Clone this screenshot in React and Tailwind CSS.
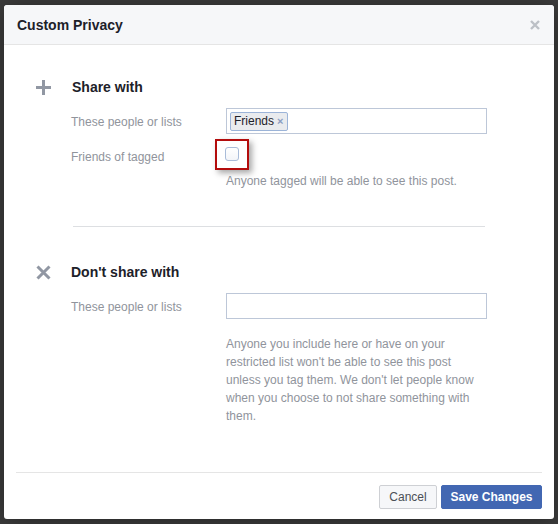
import React from "react";

function PlusIcon() {
  return (
    <svg width="15" height="15" viewBox="0 0 15 15">
      <rect x="0" y="6" width="15" height="3" fill="#9197a3" />
      <rect x="6" y="0" width="3" height="15" fill="#9197a3" />
    </svg>
  );
}

function CrossIcon() {
  return (
    <svg width="15" height="15" viewBox="0 0 15 15">
      <path d="M1.5 1.5 L13.5 13.5 M13.5 1.5 L1.5 13.5" stroke="#9197a3" strokeWidth="3" />
    </svg>
  );
}

export default function App() {
  const font = { fontFamily: '"Liberation Sans", Arial, sans-serif' };
  return (
    <div className="w-[558px] h-[524px] bg-[#3d3d3d] pt-[5px] pl-[4px] overflow-hidden" style={font}>
      <div className="w-[550px] h-[514px] bg-white rounded-[3px] shadow-[0_2px_26px_rgba(0,0,0,0.4)] flex flex-col overflow-hidden">
        {/* Header */}
        <div className="h-[40px] shrink-0 bg-[#f6f7f9] border-b border-[#e5e5e5] flex items-center justify-between pl-[13px] pr-[14px] rounded-t-[3px]">
          <span className="text-[14px] font-bold text-[#1d2129] leading-[18px]">Custom Privacy</span>
          <svg width="10" height="10" viewBox="0 0 10 10" className="mt-[1px]">
            <path d="M1 1 L9 9 M9 1 L1 9" stroke="#bcc0c6" strokeWidth="2.4" />
          </svg>
        </div>

        {/* Body */}
        <div className="flex-1 pl-[32px] pt-[33px]">
          {/* Share with */}
          <div className="flex">
            <div className="w-[36px] h-[18px] flex items-center">
              <PlusIcon />
            </div>
            <div className="flex flex-col">
              <div className="text-[14px] font-bold text-[#1d2129] leading-[18px]">Share with</div>
              <div className="flex items-center mt-[12px] -ml-px">
                <div className="w-[155px] text-[12px] text-[#90949c] leading-[18px] pt-[2px]">These people or lists</div>
                <div className="w-[261px] h-[26px] border border-[#bdc7d8] bg-white flex items-center px-[3px]">
                  <div className="h-[19px] flex items-center bg-[#e9ebee] border border-[#9cb4d8] rounded-[2px] pl-[3px] pr-[4px] text-[12px] text-[#1d2129]">
                    Friends
                    <span className="ml-[3px] text-[11px] font-bold text-[#8a9cc1] leading-none">×</span>
                  </div>
                </div>
              </div>
              <div className="flex items-start mt-[13px] -ml-px">
                <div className="w-[154px] text-[12px] text-[#90949c] leading-[18px] pt-[1px]">Friends of tagged</div>
                <div className="relative w-[14px] h-[14px]">
                  <div className="absolute left-[-10px] top-[-8px] w-[34px] h-[31px] border-[2px] border-[#b30c0c] shadow-[3px_3px_6px_rgba(0,0,0,0.35)]"></div>
                  <div className="w-[14px] h-[14px] rounded-[3px] border border-[#a9bcd9] bg-gradient-to-b from-white to-[#f3f5f9]"></div>
                </div>
              </div>
              <div className="ml-[154px] mt-[6px] text-[12px] text-[#90949c] leading-[18px]">
                Anyone tagged will be able to see this post.
              </div>
            </div>
          </div>

          <div className="ml-[37px] mt-[36px] w-[412px] h-px bg-[#dddfe2]"></div>

          {/* Don't share with */}
          <div className="flex mt-[36px]">
            <div className="w-[36px] h-[18px] flex items-center">
              <CrossIcon />
            </div>
            <div className="flex flex-col -ml-px">
              <div className="text-[14px] font-bold text-[#1d2129] leading-[18px]">Don't share with</div>
              <div className="flex items-center mt-[12px]">
                <div className="w-[155px] text-[12px] text-[#90949c] leading-[18px] pt-[2px]">These people or lists</div>
                <div className="w-[261px] h-[26px] border border-[#bdc7d8] bg-white"></div>
              </div>
              <div className="ml-[155px] mt-[16px] w-[261px] text-[12px] text-[#90949c] leading-[18px]">
                Anyone you include here or have on your restricted list won't be able to see this post unless you tag them. We don't let people know when you choose to not share something with them.
              </div>
            </div>
          </div>
        </div>

        {/* Footer */}
        <div className="shrink-0 mx-[12px] border-t border-[#e5e5e5] pt-[12px] pb-[10px] flex justify-end gap-[4px]">
          <button className="h-[24px] w-[58px] bg-[#f6f7f9] border border-[#ced0d4] rounded-[2px] text-[12px] text-[#4b4f56] font-normal">
            Cancel
          </button>
          <button className="h-[24px] w-[101px] bg-[#4267b2] border border-[#4267b2] rounded-[2px] text-[12px] text-white font-bold">
            Save Changes
          </button>
        </div>
      </div>
    </div>
  );
}
